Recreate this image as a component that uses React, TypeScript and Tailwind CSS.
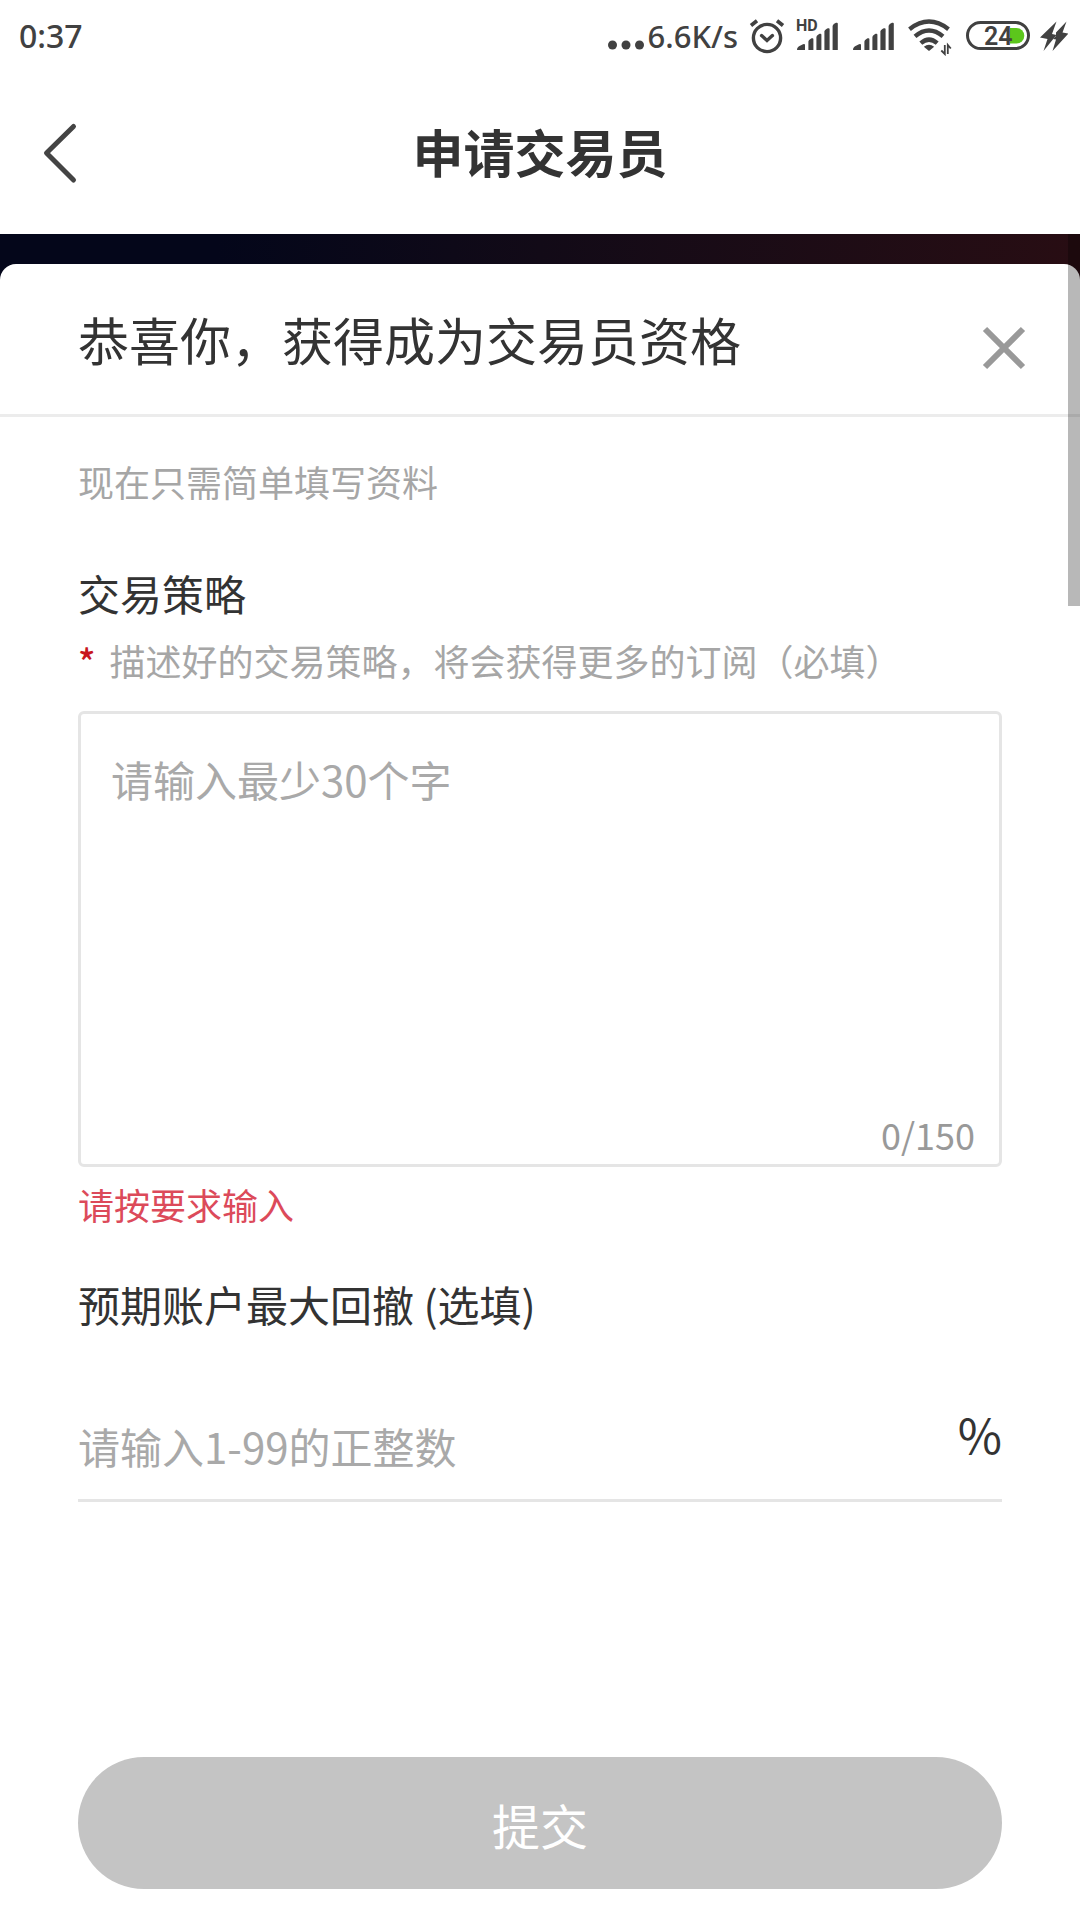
import React, { useState } from 'react';

const MAX_LENGTH = 150;

const AlarmIcon: React.FC = () => (
  <svg className="h-10 w-[38px]" viewBox="0 0 38 40" fill="none" stroke="currentColor" strokeWidth={3.4} strokeLinecap="round" aria-hidden="true">
    <circle cx="19" cy="22" r="13.6" />
    <path d="M13.6 19.6l5.4 4.8 5.4-4.8" />
    <path d="M3 9.4l6-4.6M35 9.4l-6-4.6" strokeWidth={3.8} strokeLinecap="butt" />
  </svg>
);

const SignalIcon: React.FC<{ hd?: boolean }> = ({ hd }) => (
  <svg className="h-10 w-[46px]" viewBox="0 0 46 40" fill="currentColor" aria-hidden="true">
    <path d="M1 34c0-2 1-3.200 3-4.200l3-1.600q2-.8 2 .9V34z" />
    <path d="M12.400 34v-8.500q0-1.600 2-2.600l1.200-.6q1.800-.6 1.800.9V34z" />
    <path d="M20.400 34V21q0-1.600 2-2.600l1.200-.6q1.800-.6 1.800.9V34z" />
    <path d="M28.400 34V15.500q0-1.600 2-2.600l1.400-.6q1.800-.6 1.800.9V34z" />
    <path d="M36.600 34V10q0-1.600 2-2.600l1.400-.6q1.800-.6 1.800.9V34z" />
    {hd && (
      <text x="0" y="15" fontSize="16" fontWeight="700" fontFamily="Roboto, sans-serif">HD</text>
    )}
  </svg>
);

const WifiIcon: React.FC = () => (
  <svg className="h-10 w-12" viewBox="0 0 48 40" fill="none" stroke="currentColor" strokeWidth={4.4} aria-hidden="true">
    <path d="M1.500 13.200Q21 -2 40.500 13.200" />
    <path d="M7 20.400Q21 8.600 35 20.400" />
    <path d="M12.800 27.200Q21 20 29.200 27.200" />
    <path d="M21 35l-5.200-4.200q5.200-4.200 10.400 0z" fill="currentColor" stroke="none" />
    <path d="M36.800 29v9l-3.500-3.500M39.800 38v-9l3 3.500" strokeWidth={1.8} />
  </svg>
);

const BatteryIcon: React.FC = () => (
  <svg className="h-10 w-16" viewBox="0 0 64 40" fill="none" aria-hidden="true">
    <rect x="1.500" y="6.500" width="61" height="26" rx="13" stroke="currentColor" strokeWidth={3} />
    <path d="M44 12h6.500a7.800 7.800 0 010 15.600H44z" fill="#5cc61c" />
    <text x="18" y="29" fontSize="25" fontWeight="600" fontFamily="Roboto, sans-serif" fill="currentColor">24</text>
  </svg>
);

const ChargingIcon: React.FC = () => (
  <svg className="h-10 w-7" viewBox="0 0 28 40" fill="currentColor" aria-hidden="true">
    <path d="M16.500 5.500L0 21.500l7.500 1.500L3.500 35 16.500 19l-4.500-1z" />
    <path d="M26.500 5.500L16 16.500v3.500l-3 3 3 .6L12.500 35 28.500 17.500l-6-1z" />
  </svg>
);

const StatusBar: React.FC = () => (
  <div className="flex h-[66px] items-center justify-between pt-[6px] pr-3 pl-[19px] font-['Noto_Sans',sans-serif] font-medium text-[#414141]">
    <span className="text-[32px] leading-10">0:37</span>
    <div className="flex items-center gap-[10px]">
      <div className="flex items-center gap-1">
        <svg className="h-10 w-9" viewBox="0 0 36 40" fill="currentColor" aria-hidden="true">
          <circle cx="4.500" cy="29" r="4.500" />
          <circle cx="18" cy="29" r="4.500" />
          <circle cx="31.500" cy="29" r="4.500" />
        </svg>
        <span className="text-[31px] leading-10">6.6K/s</span>
      </div>
      <AlarmIcon />
      <SignalIcon hd />
      <SignalIcon />
      <WifiIcon />
      <BatteryIcon />
      <ChargingIcon />
    </div>
  </div>
);

const NavBar: React.FC = () => (
  <header className="grid h-[168px] grid-cols-[1fr_auto_1fr] items-center">
    <button type="button" aria-label="返回" className="w-fit pt-[6px] pl-10">
      <svg className="h-16 w-10" viewBox="0 0 40 64" fill="none" stroke="#444" strokeWidth={5} strokeLinecap="round" strokeLinejoin="round">
        <path d="M33.500 5.500L6.500 32l27 27" />
      </svg>
    </button>
    <h1 className="pt-[2px] text-[51px] leading-[72px] font-bold">申请交易员</h1>
  </header>
);

export default function App() {
  const [strategy, setStrategy] = useState('');
  const [drawdown, setDrawdown] = useState('');

  return (
    <div className="flex min-h-screen flex-col bg-white font-['Noto_Sans_CJK_SC',sans-serif] text-[#333]">
      <StatusBar />
      <NavBar />

      <main className="relative flex flex-1 flex-col bg-linear-to-r from-[#04061a] from-20% via-[#120a17] to-[#280d13] pt-[30px]">
        <section className="flex flex-1 flex-col rounded-t-[16px] bg-white">
          <div className="flex items-center justify-between border-b-3 border-[#ececec] pr-[51px] pl-[78px]">
            <h2 className="py-[39px] text-[51px] leading-[72px]">恭喜你，获得成为交易员资格</h2>
            <button type="button" aria-label="关闭" className="pt-[18px]">
              <svg className="size-[50px]" viewBox="0 0 50 50" fill="none" stroke="#999" strokeWidth={6}>
                <path d="M6 6l38 38M44 6l-38 38" />
              </svg>
            </button>
          </div>

          <form className="flex flex-1 flex-col px-[78px] pt-[37px] pb-[31px]" onSubmit={(e) => e.preventDefault()}>
            <p className="text-[36px] leading-[54px] text-[#a6a6a6]">现在只需简单填写资料</p>

            <label htmlFor="strategy" className="mt-[55px] text-[42px] leading-[60px]">交易策略</label>
            <p className="mt-[10px] flex gap-[14px] text-[36px] leading-[54px] text-[#a6a6a6]">
              <span className="font-medium text-[#c8161d]">*</span>
              描述好的交易策略，将会获得更多的订阅（必填）
            </p>

            <div className="mt-6 flex h-[456px] flex-col rounded-[6px] border-3 border-[#e5e5e5] pb-[6px]">
              <textarea
                id="strategy"
                maxLength={MAX_LENGTH}
                value={strategy}
                onChange={(e) => setStrategy(e.target.value)}
                placeholder="请输入最少30个字"
                className="w-full flex-1 resize-none px-[30px] pt-[35px] text-[42px] leading-[60px] outline-none placeholder:text-[#a9a9a9]"
              />
              <span className="pr-6 text-right text-[36px] leading-[48px] text-[#999]">{strategy.length}/{MAX_LENGTH}</span>
            </div>
            <p className="mt-[10px] text-[36px] leading-[54px] text-[#dc4a5a]">请按要求输入</p>

            <label htmlFor="drawdown" className="mt-[43px] text-[42px] leading-[60px]">预期账户最大回撤 (选填)</label>
            <div className="mt-[69px] flex items-start border-b-3 border-[#e5e5e5]">
              <input
                id="drawdown"
                type="text"
                inputMode="numeric"
                value={drawdown}
                onChange={(e) => setDrawdown(e.target.value)}
                placeholder="请输入1-99的正整数"
                className="h-24 min-w-0 flex-1 pt-3 pb-6 text-[42px] leading-[60px] outline-none placeholder:text-[#a9a9a9]"
              />
              <span className="text-[48px] leading-[60px]">%</span>
            </div>

            <button type="submit" className="mt-auto h-[132px] w-full rounded-full bg-[#c4c4c4] pt-[2px] text-[48px] leading-[72px] text-white">
              提交
            </button>
          </form>
        </section>

        {/* scroll thumb */}
        <div className="absolute top-0 right-0 h-[372px] w-3 bg-black/28" />
      </main>
    </div>
  );
}
